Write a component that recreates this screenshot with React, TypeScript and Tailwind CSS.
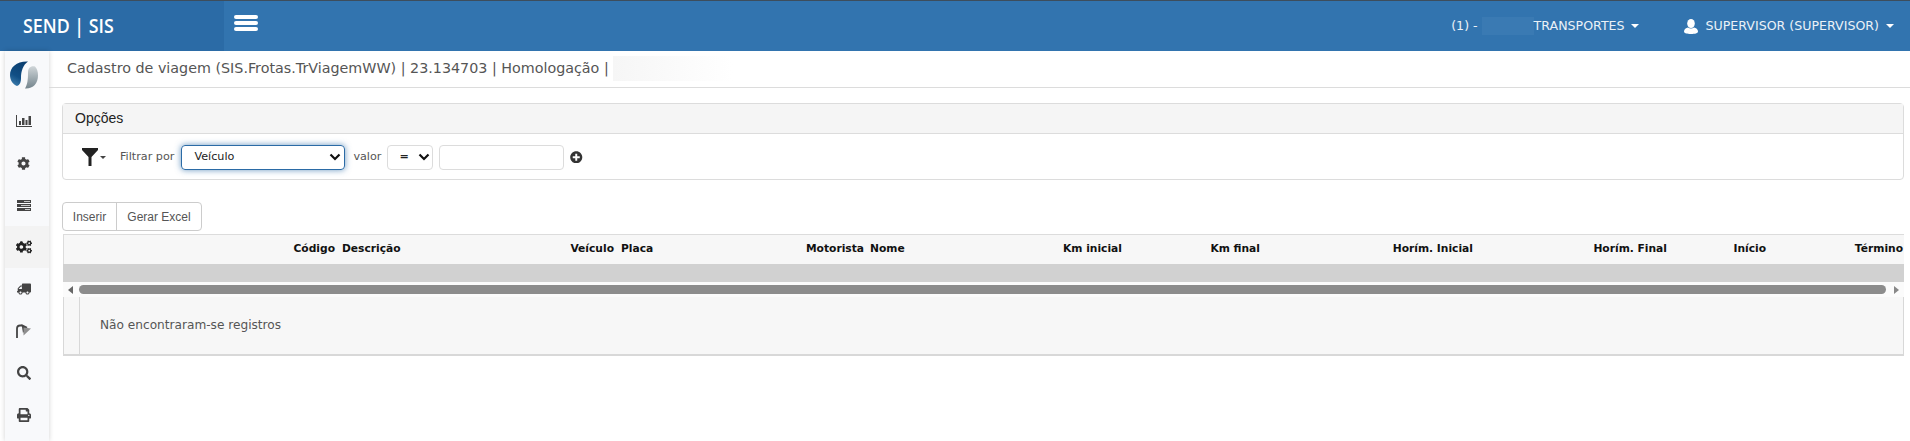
import React from "react";
import { FaCog, FaCogs, FaTruck, FaSearch, FaPrint, FaPlusCircle } from "react-icons/fa";

const dv = "font-['DejaVu_Sans',sans-serif]";
const lib = "font-['Liberation_Sans',sans-serif]";

function Caret() {
  return <span className="inline-block w-0 h-0 border-x-[4px] border-x-transparent border-t-[4px] border-t-white" />;
}

function Stats() {
  return (
    <svg width="16" height="12" viewBox="0 0 16 12" fill="#444">
      <path d="M0 0h1v11h15v1H0z" />
      <rect x="3" y="6" width="2" height="4" />
      <rect x="6" y="3" width="2.500" height="7" />
      <rect x="9.500" y="5" width="2" height="5" />
      <rect x="12.500" y="1" width="2.500" height="9" />
    </svg>
  );
}

function Tasks() {
  return (
    <svg width="14" height="11" viewBox="0 0 14 11">
      <rect y="0" width="14" height="3" fill="#444" />
      <rect y="4" width="14" height="3" fill="#444" />
      <rect y="8" width="14" height="3" fill="#444" />
      <rect x="7" y="1.200" width="6" height="0.800" fill="#e8e8e8" />
      <rect x="4" y="5.200" width="9" height="0.800" fill="#e8e8e8" />
      <rect x="8" y="9.200" width="5" height="0.800" fill="#e8e8e8" />
    </svg>
  );
}

function Flag() {
  return (
    <svg width="15" height="14" viewBox="0 0 15 14">
      <path d="M1 14V4.500Q1 1.500 4 1.500h2" fill="none" stroke="#444" strokeWidth="1.800" />
      <path d="M5.500 0l6 3-4.500 6z" fill="#444" />
      <path d="M7.500 3.500L15 4.500 7.500 11.500z" fill="#8f8f8f" />
    </svg>
  );
}

const sideItems = [
  { el: <Stats /> },
  { el: <FaCog className="text-[13px]" /> },
  { el: <Tasks /> },
  { el: <FaCogs className="text-[16px] text-[#222]" />, active: true },
  { el: <FaTruck className="text-[14px] -scale-x-100" /> },
  { el: <Flag /> },
  { el: <FaSearch className="text-[14px]" /> },
  { el: <FaPrint className="text-[14px]" /> },
];

function Th({ w, right, children }: { w: string; right?: boolean; children: React.ReactNode }) {
  return <div className={`${w} shrink-0 whitespace-nowrap ${right ? "text-right" : "text-left"}`}>{children}</div>;
}

function Chevron() {
  return (
    <svg width="12" height="8" viewBox="0 0 12 8">
      <path d="M1.500 1.500L6 6l4.500-4.500" fill="none" stroke="#111" strokeWidth="2.2" />
    </svg>
  );
}

export default function App() {
  return (
    <div className={`w-[1910px] h-[441px] overflow-hidden bg-white flex flex-col ${dv}`}>
      <header className="h-[51px] shrink-0 flex border-t border-[#3d4d5c] bg-[#3274af] text-white">
        <div className="w-[224px] bg-[#2b6ba6] flex items-center pl-[23px]">
          <span className="font-['Open_Sans',sans-serif] font-semibold text-[20px] whitespace-pre scale-x-[0.89] origin-left">SEND | SIS</span>
        </div>
        <div className="flex items-start pl-[10px] pt-[14px]">
          <div className="w-[24px] flex flex-col gap-[2px]">
            <span className="h-[4px] rounded-[2px] bg-white" />
            <span className="h-[4px] rounded-[2px] bg-white" />
            <span className="h-[4px] rounded-[2px] bg-white" />
          </div>
        </div>
        <div className="ml-auto flex items-center text-[12.6px] pr-[16px] text-[#eaf1f7]">
          <span className="whitespace-pre">(1) - </span>
          <span className="w-[52px] h-[18px] bg-[#3a7ab3]" />
          <span>TRANSPORTES</span>
          <span className="ml-[6px] mr-[45px] flex"><Caret /></span>
          <svg width="14" height="15" viewBox="0 0 14 15" fill="#fff" className="mr-[8px]">
            <ellipse cx="7" cy="4.500" rx="3.800" ry="4.500" />
            <path d="M0 12.500c0-2.500 2-3.500 4-4 1.500 1.200 4.500 1.200 6 0 2 .5 4 1.500 4 4 0 1.800-3 2.500-7 2.500s-7-.7-7-2.500z" />
          </svg>
          <span>SUPERVISOR (SUPERVISOR)</span>
          <span className="ml-[7px] flex"><Caret /></span>
        </div>
      </header>
      <div className="flex flex-1 min-h-0">
        <aside className="ml-[5px] w-[44px] shrink-0 bg-[#f8f9fb] shadow-[0_0_5px_rgba(0,0,0,0.18)] text-[#444] flex flex-col items-stretch">
          <div className="h-[49px] flex items-center justify-center pr-[6px] pb-[1px]">
            <svg width="28" height="28" viewBox="0 0 28 28">
              <defs>
                <linearGradient id="a" x1="0.6" y1="0" x2="0.2" y2="1">
                  <stop offset="0" stopColor="#0b3f70" />
                  <stop offset="0.6" stopColor="#114f85" />
                  <stop offset="1" stopColor="#3f7fae" />
                </linearGradient>
                <linearGradient id="b" x1="0.5" y1="0" x2="0.5" y2="1">
                  <stop offset="0" stopColor="#cfd5d8" />
                  <stop offset="1" stopColor="#74858d" />
                </linearGradient>
              </defs>
              <path d="M18 0.500C7 0 0 6 0 14c0 5 2.500 9 7 11 3-1 4-4 4-8 0-7 2-13 7-16.500z" fill="url(#a)" />
              <path d="M15 27.500c8 .5 13-5 13-13 0-4-1-7-3-9-4-1-7 1-7 6 0 7-.5 12-3 16z" fill="url(#b)" />
            </svg>
          </div>
          {sideItems.map(({ el, active }, i) => (
            <div key={i} className={`h-[42px] shrink-0 flex items-center justify-center pr-[7px] ${active ? "bg-[#f3f3f3]" : ""}`}>
              {el}
            </div>
          ))}
        </aside>
        <main className="flex-1 min-w-0 flex flex-col">
          <div className="h-[37px] shrink-0 border-b border-[#dcdcdc] flex items-center pl-[18px] text-[14.3px] text-[#555] pb-[1px]">
            <span className="whitespace-pre">Cadastro de viagem (SIS.Frotas.TrViagemWW) | 23.134703 | Homologação | </span>
            <span className="w-[120px] h-[25px] bg-gradient-to-r from-[#f6f6f6] to-white" />
          </div>
          <div className="ml-[13px] mr-[6px] mt-[15px] h-[77px] border border-[#dcdcdc] rounded-[4px] flex flex-col shrink-0">
            <div className={`h-[30px] bg-[#f5f5f5] border-b border-[#dcdcdc] flex items-center pl-[12px] text-[14px] text-[#222] ${lib}`}>Opções</div>
            <div className="flex-1 flex items-center pl-[19px] pt-[1px] text-[11.2px] text-[#555]">
              <svg width="16" height="18" viewBox="0 0 16 18" fill="#222"><path d="M0 0h16v2L9.500 9v9h-3V9L0 2z" /></svg>
              <span className="ml-[2px] mr-[14px] inline-block w-0 h-0 border-x-[3px] border-x-transparent border-t-[3px] border-t-[#444]" />
              <span className="mr-[7px]">Filtrar por</span>
              <div className="w-[164px] h-[25px] border border-[#2b6ba6] rounded-[4px] shadow-[0_0_6px_rgba(43,107,166,0.7)] flex items-center justify-between pl-[12px] pr-[3px] text-[#222]">
                <span>Veículo</span>
                <Chevron />
              </div>
              <span className="ml-[8px] mr-[6px]">valor</span>
              <div className="w-[46px] h-[25px] border border-[#dcdcdc] rounded-[4px] flex items-center justify-between pl-[11px] pr-[2px] text-[#222] font-bold">
                <span>=</span>
                <Chevron />
              </div>
              <div className="ml-[6px] w-[125px] h-[25px] border border-[#dcdcdc] rounded-[4px]" />
              <FaPlusCircle className="ml-[6px] text-[#333] text-[12.5px]" />
            </div>
          </div>
          <div className="ml-[13px] mt-[22px] h-[29px] w-[140px] border border-[#ccc] rounded-[4px] flex text-[12px] text-[#555] shrink-0">
            <div className={`w-[54px] border-r border-[#ccc] flex items-center justify-center ${lib}`}>Inserir</div>
            <div className={`flex-1 flex items-center justify-center ${lib}`}>Gerar Excel</div>
          </div>
          <div className="ml-[14px] mr-[6px] mt-[3px] flex flex-col shrink-0">
            <div className="h-[30px] border-t border-l border-[#dcdcdc] bg-[#f7f7f7] flex items-center text-[10.7px] font-bold text-[#111]">
              <Th w="w-[271px]" right>Código</Th>
              <Th w="w-[190px] pl-[7px]">Descrição</Th>
              <Th w="w-[89px]" right>Veículo</Th>
              <Th w="w-[172px] pl-[7px]">Placa</Th>
              <Th w="w-[78px]" right>Motorista</Th>
              <Th w="w-[186px] pl-[6px]">Nome</Th>
              <Th w="w-[72px]" right>Km inicial</Th>
              <Th w="w-[138px]" right>Km final</Th>
              <Th w="w-[213px]" right>Horím. Inicial</Th>
              <Th w="w-[194px]" right>Horím. Final</Th>
              <Th w="w-[99px]" right>Início</Th>
              <Th w="w-[137px]" right>Término</Th>
            </div>
            <div className="h-[18px] bg-[#d1d1d1]" />
            <div className="h-[15px] bg-[#fbfbfb] flex items-center px-[5px] gap-[6px]">
              <span className="w-0 h-0 border-y-[4.5px] border-y-transparent border-r-[5px] border-r-[#666]" />
              <span className="flex-1 h-[9px] rounded-full bg-[#8c8c8c]" />
              <span className="w-0 h-0 border-y-[4.5px] border-y-transparent border-l-[5px] border-l-[#888] ml-[2px]" />
            </div>
            <div className="h-[59px] flex bg-[#f7f7f7] border-x border-b-2 border-[#d8d8d8]">
              <div className="w-[16px] border-r border-[#d8d8d8]" />
              <div className="flex items-center pl-[20px] text-[12.15px] text-[#555] pb-[1px]">Não encontraram-se registros</div>
            </div>
          </div>
        </main>
      </div>
    </div>
  );
}
